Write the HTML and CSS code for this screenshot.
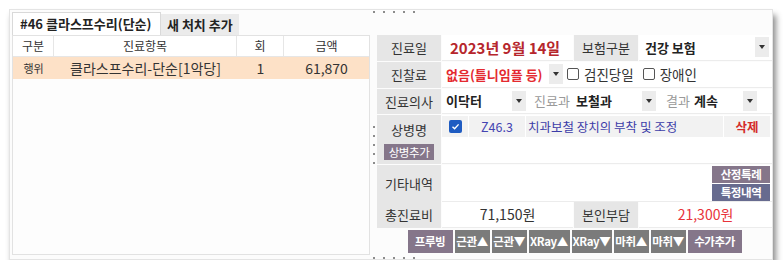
FILE: index.html
```html
<!DOCTYPE html>
<html>
<head>
    <title>처치 입력</title>
    <link rel="stylesheet" href="styles.css">
</head>
<body>

<div class="window">
    <div class="left">
        <div class="tabs">
            <div class="tab active">#46 클라스프수리(단순)</div>
            <div class="tab">새 처치 추가</div>
        </div>
        <div class="grid">
            <div class="grid-head">
                <span>구분</span>
                <span>진료항목</span>
                <span>회</span>
                <span>금액</span>
            </div>
            <div class="grid-row selected">
                <span class="kind">행위</span>
                <span>클라스프수리-단순[1악당]</span>
                <span>1</span>
                <span>61,870</span>
            </div>
        </div>
    </div>

    <div class="side">
        <div class="hdots"><i></i><i></i><i></i><i></i><i></i></div>
        <div class="side-body">
            <div class="vsplit"><i></i><i></i><i></i><i></i><i></i></div>

            <div class="panel">
                <div class="row r1">
                    <div class="label">진료일</div>
                    <div class="val date">2023년 9월 14일</div>
                    <div class="label">보험구분</div>
                    <div class="val">
                        <span class="bold grow">건강 보험</span>
                        <span class="drop"></span>
                    </div>
                </div>

                <div class="row wide r2">
                    <div class="label">진찰료</div>
                    <div class="val">
                        <span class="red-bold w-fee">없음(틀니임플 등)</span>
                        <span class="drop"></span>
                        <span class="check"></span>
                        <span class="chk-text">검진당일</span>
                        <span class="check"></span>
                        <span class="chk-text">장애인</span>
                    </div>
                </div>

                <div class="row wide r3">
                    <div class="label">진료의사</div>
                    <div class="val">
                        <span class="bold w-doc">이닥터</span>
                        <span class="drop"></span>
                        <span class="muted w-dept">진료과</span>
                        <span class="bold w-deptv">보철과</span>
                        <span class="drop"></span>
                        <span class="muted w-res">결과</span>
                        <span class="bold w-resv">계속</span>
                        <span class="drop"></span>
                    </div>
                </div>

                <div class="row wide r4">
                    <div class="label stack">
                        <span>상병명</span>
                        <button class="btn purple small">상병추가</button>
                    </div>
                    <div class="val top">
                        <div class="dx-line">
                            <div class="dx-cell center"><span class="check on"><svg viewBox="0 0 13 13" width="13" height="13"><polyline points="3.5,6.8 5.6,8.8 9.6,4.4" fill="none" stroke="#fff" stroke-width="1.4"/></svg></span></div>
                            <div class="dx-cell center code">Z46.3</div>
                            <div class="dx-cell desc">치과보철 장치의 부착 및 조정</div>
                            <div class="dx-cell center del">삭제</div>
                        </div>
                    </div>
                </div>

                <div class="row wide r5">
                    <div class="label">기타내역</div>
                    <div class="val extra">
                        <div class="extra-btns">
                            <button class="btn purple">산정특례</button>
                            <button class="btn slate">특정내역</button>
                        </div>
                    </div>
                </div>

                <div class="row r6">
                    <div class="label">총진료비</div>
                    <div class="val money">71,150원</div>
                    <div class="label">본인부담</div>
                    <div class="val money red">21,300원</div>
                </div>

                <div class="actions">
                    <button class="btn purple" style="width:45px">프루빙</button>
                    <button class="btn gray" style="width:35px">근관▲</button>
                    <button class="btn gray" style="width:35px">근관▼</button>
                    <button class="btn gray" style="width:41px">XRay▲</button>
                    <button class="btn gray" style="width:40px">XRay▼</button>
                    <button class="btn gray" style="width:35px">마취▲</button>
                    <button class="btn gray" style="width:35px">마취▼</button>
                    <button class="btn purple" style="width:54px">수가추가</button>
                </div>
            </div>
        </div>
        <div class="hdots bottom"><i></i><i></i><i></i><i></i><i></i></div>
    </div>
</div>

</body>
</html>
```

FILE: styles.css
```css
body {
    margin: 0;
    background: #fff;
    font-family: "Noto Sans CJK KR", "Noto Sans", sans-serif;
    font-size: 13px;
    color: #333;
}

.window {
    margin: 9px 0 0 9px;
    width: 764px;
    height: 251px;
    box-sizing: border-box;
    border: 1px solid #e4e4e4;
    background: #fcfcfc;
    padding: 2px 0 0 2px;
    display: flex;
    box-shadow: 3px 6px 6px rgba(0, 0, 0, 0.45);
}

/* 왼쪽: 탭 + 목록 */
.left {
    width: 358px;
    display: flex;
    flex-direction: column;
}

.tabs {
    display: flex;
    align-items: flex-end;
    height: 23px;
}

.tab {
    width: 78px;
    height: 21px;
    line-height: 21px;
    box-sizing: border-box;
    padding-left: 6px;
    background: #ebebeb;
    font-weight: bold;
    font-size: 13px;
    color: #222;
}

.tab.active {
    width: 149px;
    height: 23px;
    line-height: 22px;
    padding-left: 7px;
    background: #fff;
    border: 1px solid #d9d9d9;
    border-bottom: none;
}

.grid {
    height: 220px;
    box-sizing: border-box;
    border: 1px solid #e2e2e2;
    background: #fdfdfd;
}

.grid-head,
.grid-row {
    display: grid;
    grid-template-columns: 41px 183px 47px 1fr;
}

.grid-head {
    height: 20px;
    line-height: 19px;
    font-size: 12px;
    background: #fff;
    border-bottom: 1px solid #e6e6e6;
}

.grid-head span {
    text-align: center;
    border-right: 1px solid #e6e6e6;
}

.grid-head span:last-child {
    border-right: none;
}

.grid-row {
    height: 22px;
    line-height: 22px;
    font-size: 14px;
    text-align: center;
}

.grid-row.selected {
    background: #fde1c7;
}

.grid-row .kind {
    font-size: 11px;
}

/* 오른쪽 패널 */
.side {
    width: 402px;
    margin-top: -3px;
    display: flex;
    flex-direction: column;
}

.hdots {
    height: 26px;
    box-sizing: border-box;
    padding: 2px 0 0 3px;
    display: flex;
    gap: 8px;
}

.hdots.bottom {
    height: auto;
    padding-top: 2px;
}

.hdots i,
.vsplit i {
    width: 2px;
    height: 2px;
    background: #8c8c8c;
}

.side-body {
    height: 222px;
    display: flex;
}

.vsplit {
    width: 7px;
    box-sizing: border-box;
    padding-left: 3px;
    display: flex;
    flex-direction: column;
    justify-content: center;
    gap: 7px;
}

.panel {
    width: 395px;
    display: flex;
    flex-direction: column;
    gap: 1px;
}

.row {
    display: grid;
    grid-template-columns: 64px 131px 64px 1fr;
    column-gap: 1px;
}

.row.wide {
    grid-template-columns: 64px 1fr;
}

.r1, .r2, .r6 { height: 26px; }
.r3 { height: 25px; }
.r4 { height: 49px; }
.r5 { height: 36px; }

.label {
    background: #e6e6e6;
    display: flex;
    align-items: center;
    justify-content: center;
    font-size: 13px;
    color: #333;
}

.label.stack {
    flex-direction: column;
    justify-content: flex-start;
    padding-top: 5px;
    gap: 5px;
    box-sizing: border-box;
}

.val {
    background: #fff;
    border-bottom: 1px solid #ececec;
    display: flex;
    align-items: center;
    padding-left: 4px;
    box-sizing: border-box;
}

.val.top {
    align-items: flex-start;
    padding: 1px 0 0 0;
}

.date {
    padding-left: 8px;
    font-size: 15px;
    font-weight: bold;
    color: #b6262c;
}

.bold {
    font-weight: bold;
    color: #222;
}

.grow {
    flex: 1;
    padding-left: 2px;
}

.red-bold {
    font-weight: bold;
    color: #e42a30;
}

.muted {
    color: #9a9a9a;
}

.drop {
    width: 14px;
    height: 20px;
    background: #ececec;
    display: flex;
    align-items: center;
    justify-content: center;
    margin-right: 3px;
}

.drop::after {
    content: "";
    border-top: 4px solid #333;
    border-left: 3px solid transparent;
    border-right: 3px solid transparent;
}

.w-fee { width: 103px; }
.w-doc { width: 66px; }
.w-dept { width: 47px; padding-left: 5px; box-sizing: border-box; }
.w-deptv { width: 66px; }
.w-res { width: 35px; padding-left: 7px; box-sizing: border-box; }
.w-resv { width: 49px; }

.check {
    width: 12px;
    height: 12px;
    box-sizing: border-box;
    border: 1px solid #555;
    border-radius: 2px;
    background: #fff;
    margin: 0 5px 0 1px;
}

.check.on {
    width: 13px;
    height: 13px;
    border: none;
    background: #1f5cc2;
    margin: 0;
    display: block;
}

.check.on svg {
    display: block;
}

.chk-text {
    margin-right: 8px;
    font-size: 13.5px;
}

.dx-line {
    display: grid;
    grid-template-columns: 26px 56px 197px 46px;
    column-gap: 1px;
    height: 21px;
}

.dx-cell {
    background: #f2f2f2;
    display: flex;
    align-items: center;
    font-size: 12.5px;
}

.dx-cell.center {
    justify-content: center;
}

.code {
    color: #4444b2;
}

.desc {
    color: #3c3ca8;
    padding-left: 2px;
}

.del {
    color: #d42a2a;
    font-weight: bold;
}

.val.extra {
    justify-content: flex-end;
    align-items: flex-start;
    padding: 1px 2px 0 0;
}

.extra-btns {
    display: flex;
    flex-direction: column;
    gap: 1px;
    width: 58px;
}

.extra-btns .btn {
    height: 17px;
    width: 58px;
}

.money {
    justify-content: center;
    padding-left: 0;
    font-size: 14px;
    color: #333;
}

.money.red {
    color: #e8333a;
}

.btn {
    border: none;
    margin: 0;
    padding: 0;
    color: #fff;
    font-family: inherit;
    font-size: 11.5px;
    font-weight: bold;
    letter-spacing: -0.4px;
    height: 23px;
    cursor: pointer;
}

.btn.small {
    width: 50px;
    height: 16px;
    font-size: 11.5px;
    font-weight: normal;
}

.btn.purple { background: #85768a; }
.btn.slate { background: #676b8f; }
.btn.gray { background: #7b7b7b; }

.actions {
    margin-top: 1px;
    display: flex;
    justify-content: center;
    gap: 2px;
}
```
